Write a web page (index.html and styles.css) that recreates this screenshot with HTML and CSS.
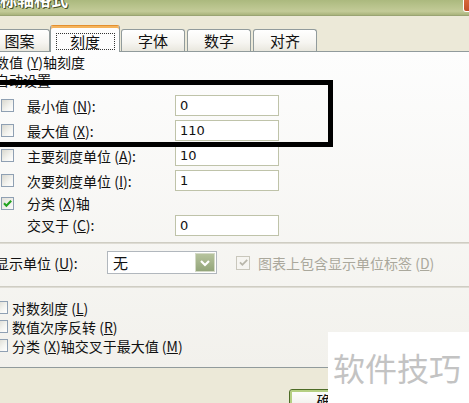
FILE: index.html
```html
<!DOCTYPE html>
<html lang="zh">
<head>
<meta charset="utf-8">
<title>坐标轴格式</title>
<link rel="stylesheet" href="styles.css">
</head>
<body>
<div class="window">
  <div class="titlebar">
    <span class="title">坐标轴格式</span>
    <span class="close"></span>
  </div>
  <div class="dialog-body">
    <div class="tabs">
      <div class="tab first">图案</div>
      <div class="tab active"><span class="focus">刻度</span></div>
      <div class="tab">字体</div>
      <div class="tab">数字</div>
      <div class="tab">对齐</div>
    </div>
    <div class="panel">
      <div class="heading h1">数值 (<u>Y</u>)轴刻度</div>
      <div class="heading h2">自动设置</div>
      <div class="auto-grid">
        <span class="cb"></span><span class="lbl">最小值 (<u>N</u>):</span><span class="field">0</span>
        <span class="cb"></span><span class="lbl">最大值 (<u>X</u>):</span><span class="field">110</span>
        <span class="cb"></span><span class="lbl">主要刻度单位 (<u>A</u>):</span><span class="field">10</span>
        <span class="cb"></span><span class="lbl">次要刻度单位 (<u>I</u>):</span><span class="field">1</span>
        <span class="cb checked"><svg width="11" height="11" viewBox="0 0 11 11"><path d="M2 5.3 L4.4 7.8 L9.2 2.8" stroke="#22a31f" stroke-width="2.1" fill="none"/></svg></span><span class="lbl">分类 (<u>X</u>)轴</span><span></span>
        <span></span><span class="lbl">交叉于 (<u>C</u>):</span><span class="field">0</span>
      </div>
      <div class="sep"></div>
      <div class="unit-row">
        <span class="unit-label">显示单位 (<u>U</u>):</span>
        <span class="select"><span class="select-text">无</span><span class="drop"><svg width="12" height="10" viewBox="0 0 12 10"><path d="M2 3 L6 7 L10 3" stroke="#fff" stroke-width="2.2" fill="none"/></svg></span></span>
        <span class="cb disabled"><svg width="11" height="11" viewBox="0 0 11 11"><path d="M2 5.3 L4.4 7.8 L9.2 2.8" stroke="#b8b6aa" stroke-width="1.8" fill="none"/></svg></span>
        <span class="dis-text">图表上包含显示单位标签 (<u>D</u>)</span>
      </div>
      <div class="sep"></div>
      <div class="opts">
        <div class="opt"><span class="cb"></span><span>对数刻度 (<u>L</u>)</span></div>
        <div class="opt"><span class="cb"></span><span>数值次序反转 (<u>R</u>)</span></div>
        <div class="opt"><span class="cb"></span><span>分类 (<u>X</u>)轴交叉于最大值 (<u>M</u>)</span></div>
      </div>
      <div class="highlight"></div>
    </div>
    <div class="footer">
      <button class="btn">确定</button>
    </div>
  </div>
</div>
<div class="watermark">软件技巧</div>
</body>
</html>
```
FILE: styles.css
```css
* { box-sizing: border-box; }
html, body { margin: 0; padding: 0; }
body {
  width: 469px;
  height: 403px;
  overflow: hidden;
  position: relative;
  background: #ece9d8;
  font-family: "Noto Sans CJK SC", sans-serif;
  font-size: 14px;
  color: #111;
}
u { text-decoration: underline; text-underline-offset: 1px; }

.window {
  margin-left: -12px;
  width: 499px;
}

.titlebar {
  height: 16px;
  display: flex;
  justify-content: space-between;
  overflow: hidden;
  background: linear-gradient(#abb97e, #c3cb98 75%, #a9b37c);
  border-bottom: 1px solid #9aa473;
}
.title {
  font-size: 17px;
  font-weight: bold;
  color: #fff;
  line-height: 20px;
  margin-top: -11px;
  margin-left: -5px;
  text-shadow: 1px 1px 0 #4a5428, -1px 0 0 #4a5428;
}
.close {
  width: 21px;
  height: 12px;
  margin-right: 3px;
  background: linear-gradient(#d8673c, #c24f2a);
  border-radius: 0 0 3px 3px;
  border: 1px solid #fff;
  border-top: none;
}

.dialog-body {
  padding: 0 8px 0 1px;
}

.tabs {
  height: 35px;
  display: flex;
  align-items: flex-end;
}
.tab {
  height: 22px;
  width: 64px;
  margin-right: 2px;
  border: 1px solid #919b9c;
  border-bottom: none;
  border-radius: 3px 3px 0 0;
  background: linear-gradient(#ffffff, #f6f5f1 60%, #e9e7de);
  display: flex;
  align-items: center;
  justify-content: center;
  font-size: 15px;
  line-height: 16px;
  color: #111;
}
.tab.first { width: 61px; margin-right: 0; }
.tab.active {
  width: 70px;
  height: 27px;
  margin-right: 1px;
  margin-bottom: -1px;
  position: relative;
  z-index: 1;
  background: #fdfdfd;
  border-top: 1px solid #e3902f;
  box-shadow: inset 0 2px 0 #f5b35b;
  align-items: flex-start;
}
.focus {
  margin-top: 7px;
  width: 59px;
  height: 17px;
  border: 1px dotted #333;
  display: flex;
  align-items: center;
  justify-content: center;
  line-height: 15px;
}

.panel {
  position: relative;
  border: 1px solid #919b9c;
  background: linear-gradient(#fdfdfd, #f2f1ec);
  padding: 0 0 12px 5px;
}
.heading { line-height: 18px; white-space: nowrap; }
.h1 { height: 19px; padding-top: 1px; }
.h2 { height: 18px; }

.auto-grid {
  margin-top: 4px;
  margin-left: 6px;
  display: grid;
  grid-template-columns: 13px 135px 104px;
  grid-template-rows: 25px 25px 25px 25px 20px 24px;
  column-gap: 13px;
  align-items: center;
}
.lbl { white-space: nowrap; line-height: 18px; }

.cb {
  width: 13px;
  height: 13px;
  border: 1px solid #8fa0b3;
  background: linear-gradient(135deg, #d9d8cf, #f4f4f0 60%, #ffffff);
  display: flex;
  align-items: center;
  justify-content: center;
  flex-shrink: 0;
}
.cb.checked { background: linear-gradient(135deg, #e2e1da, #fbfbf9); }
.cb.disabled {
  width: 14px;
  height: 14px;
  border-color: #c9c7bc;
  background: #f6f5f1;
}

.field {
  height: 21px;
  border: 1px solid #bfc3a9;
  background: #fff;
  font-family: "DejaVu Sans", sans-serif;
  font-size: 13px;
  line-height: 19px;
  padding-left: 4px;
  color: #111;
}

.sep {
  margin-top: 5px;
  margin-left: -10px;
  height: 2px;
  border-top: 1px solid #cfcdc3;
  border-bottom: 1px solid #dedcd4;
}

.unit-row {
  height: 37px;
  display: flex;
  align-items: center;
}
.unit-label { width: 112px; white-space: nowrap; line-height: 18px; }
.select {
  width: 110px;
  height: 23px;
  border: 1px solid #b1b7bd;
  background: #fff;
  display: flex;
  align-items: center;
  justify-content: space-between;
  padding: 1px;
}
.select-text { padding-left: 4px; line-height: 18px; font-size: 15px; }
.drop {
  width: 20px;
  height: 19px;
  background: linear-gradient(#b6c39d, #93a57a);
  border: 1px solid #d4dac7;
  display: flex;
  align-items: center;
  justify-content: center;
}
.unit-row .cb { margin-left: 19px; }
.dis-text {
  margin-left: 8px;
  color: #aaa89c;
  white-space: nowrap;
  line-height: 18px;
}

.opts { margin-top: 10px; }
.opt {
  height: 19px;
  display: flex;
  align-items: center;
  gap: 4px;
  white-space: nowrap;
  line-height: 18px;
}

.highlight {
  position: absolute;
  left: -11px;
  top: 28px;
  width: 354px;
  height: 67px;
  border: 5px solid #000;
}

.footer {
  padding: 21px 0 0 300px;
}
.btn {
  width: 85px;
  height: 23px;
  border: 1px solid #4d6b26;
  border-radius: 3px;
  background: linear-gradient(#ffffff, #ecebe4);
  box-shadow: inset 0 0 0 2px #b5cf83;
  font-family: "Noto Sans CJK SC", sans-serif;
  font-size: 15px;
  color: #111;
  padding: 0;
  line-height: 18px;
}

.watermark {
  position: absolute;
  left: 328px;
  top: 332px;
  width: 141px;
  height: 71px;
  background: #fff;
  color: #c3c3c3;
  font-size: 32px;
  line-height: 71px;
  padding-left: 5px;
  white-space: nowrap;
}
```
